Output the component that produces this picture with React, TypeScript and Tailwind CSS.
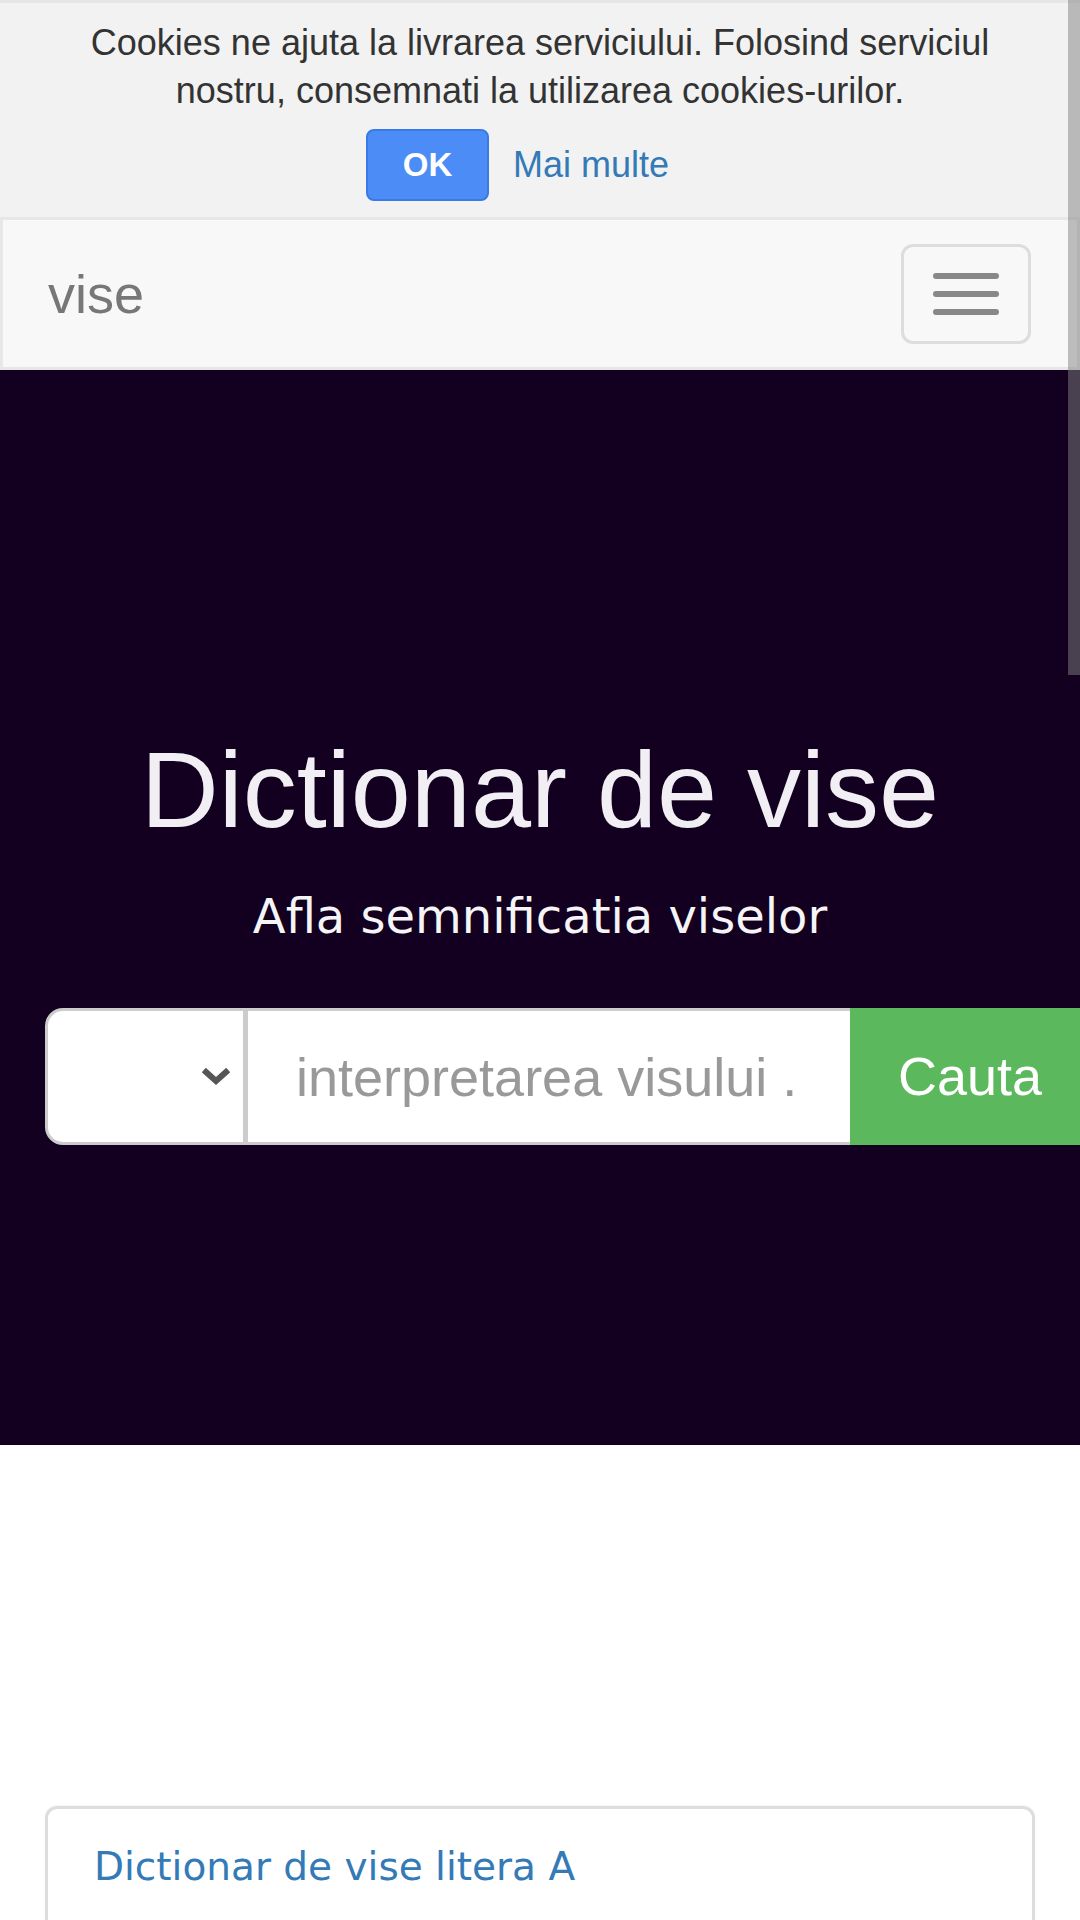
import React from "react";

export default function App() {
  return (
    <div className="relative w-full overflow-x-hidden bg-white font-['Liberation_Sans',Arial,sans-serif]">
      {/* Cookie bar */}
      <div className="border-t-[3px] border-[#e6e6e6] bg-[#f2f2f2] px-[45px] pt-[16px] pb-[16px] text-center">
        <p className="text-[36px] leading-[48px] text-[#333]">
          Cookies ne ajuta la livrarea serviciului. Folosind serviciul nostru, consemnati la utilizarea cookies-urilor.
        </p>
        <div className="mt-[14px] flex items-center justify-center gap-[24px] pr-[45px]">
          <button className="flex h-[72px] w-[123px] items-center justify-center rounded-[8px] border-[2px] border-[#3a7ae6] bg-[#4b8cf6] text-[33px] font-bold text-white">
            OK
          </button>
          <a className="text-[36px] text-[#337ab7]">Mai multe</a>
        </div>
      </div>

      {/* Navbar */}
      <div className="flex h-[153px] items-center justify-between border-[3px] border-[#e7e7e7] bg-[#f8f8f8] pl-[45px] pr-[46px]">
        <span className="text-[54px] leading-none text-[#777]">vise</span>
        <button className="flex h-[100px] w-[130px] flex-col items-center justify-center gap-[12px] rounded-[12px] border-[3px] border-[#ddd]">
          <span className="block h-[6px] w-[66px] rounded-[3px] bg-[#888]" />
          <span className="block h-[6px] w-[66px] rounded-[3px] bg-[#888]" />
          <span className="block h-[6px] w-[66px] rounded-[3px] bg-[#888]" />
        </button>
      </div>

      {/* Hero */}
      <div className="overflow-hidden bg-[#130021] pt-[360px] pb-[300px] text-center">
        <h1 className="text-[108px] leading-[119px] font-normal text-[#f1eff3]">Dictionar de vise</h1>
        <p className="mt-[33px] font-['DejaVu_Sans',Verdana,sans-serif] text-[48px] leading-[68px] text-[#f5f5f5]">
          Afla semnificatia viselor
        </p>
        <div className="mt-[58px] flex h-[137px] pl-[45px]">
          <div className="flex h-[137px] w-[203px] shrink-0 items-center justify-end rounded-l-[18px] border-[3px] border-r-[5px] border-[#ccc] bg-white pr-[13px]">
            <svg width="28" height="18" viewBox="0 0 28 18">
              <path d="M4 4 L14 13 L24 4" fill="none" stroke="#555" strokeWidth="6" strokeLinecap="square" />
            </svg>
          </div>
          <input
            className="h-[137px] w-[602px] shrink-0 border-y-[3px] border-[#ccc] bg-white pl-[48px] pr-[48px] text-left text-[54px] text-[#555] outline-none placeholder:text-[#999]"
            placeholder="interpretarea visului ..."
          />
          <button className="h-[137px] w-[238px] shrink-0 bg-[#5cb85c] pl-[48px] text-left text-[54px] text-white">
            Cauta
          </button>
        </div>
      </div>

      {/* Content */}
      <div className="px-[45px] pt-[361px] pb-[40px]">
        <div className="h-[400px] rounded-[12px] border-[3px] border-[#ddd] px-[46px] pt-[30px] shadow-[0_-1px_2px_rgba(0,0,0,0.04)]">
          <a className="font-['DejaVu_Sans',Verdana,sans-serif] text-[39px] leading-[56px] text-[#337ab7]">
            Dictionar de vise litera A
          </a>
        </div>
      </div>

      {/* Overlay scrollbar thumb */}
      <div className="pointer-events-none absolute top-0 right-0 h-[675px] w-[12px] bg-[rgba(128,128,128,0.5)]" />
    </div>
  );
}
